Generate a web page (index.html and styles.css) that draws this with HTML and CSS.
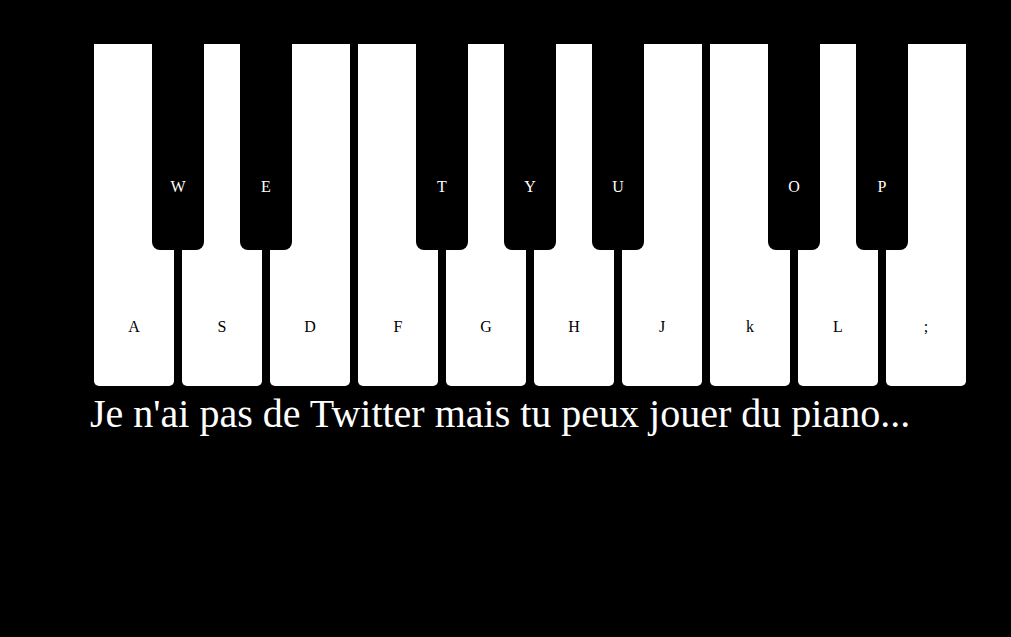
FILE: index.html
```html
<!DOCTYPE html>
<html lang="fr">
<head>
<meta charset="utf-8">
<title>Piano</title>
<link rel="stylesheet" href="styles.css">
</head>
<body>
<div class="page">
  <div class="piano">
    <div class="key white"><span class="label">A</span><div class="key black"><span class="label">W</span></div></div>
    <div class="key white"><span class="label">S</span><div class="key black"><span class="label">E</span></div></div>
    <div class="key white"><span class="label">D</span></div>
    <div class="key white"><span class="label">F</span><div class="key black"><span class="label">T</span></div></div>
    <div class="key white"><span class="label">G</span><div class="key black"><span class="label">Y</span></div></div>
    <div class="key white"><span class="label">H</span><div class="key black"><span class="label">U</span></div></div>
    <div class="key white"><span class="label">J</span></div>
    <div class="key white"><span class="label">k</span><div class="key black"><span class="label">O</span></div></div>
    <div class="key white"><span class="label">L</span><div class="key black"><span class="label">P</span></div></div>
    <div class="key white"><span class="label">;</span></div>
  </div>
  <p class="caption">Je n'ai pas de Twitter mais tu peux jouer du piano...</p>
</div>
</body>
</html>
```
FILE: styles.css
```css
html, body {
  margin: 0;
  padding: 0;
  background: #000;
}
body {
  font-family: "Liberation Serif", "Times New Roman", serif;
}
.page {
  padding: 44px 0 0 90px;
}
.piano {
  display: flex;
}
.key {
  box-sizing: border-box;
  display: flex;
  flex-direction: column;
  align-items: center;
}
.white {
  position: relative;
  width: 80px;
  height: 342px;
  margin: 0 4px;
  background: #fff;
  color: #000;
  border-radius: 0 0 5px 5px;
  padding-top: 273px;
}
.black {
  position: absolute;
  top: 0;
  left: 58px;
  width: 52px;
  height: 206px;
  background: #000;
  color: #fff;
  border-radius: 0 0 8px 8px;
  padding-top: 133px;
  z-index: 1;
}
.label {
  font-size: 16px;
  line-height: 20px;
}
.caption {
  margin: 5px 0 0;
  color: #fff;
  font-size: 40px;
  line-height: 46px;
}
```
